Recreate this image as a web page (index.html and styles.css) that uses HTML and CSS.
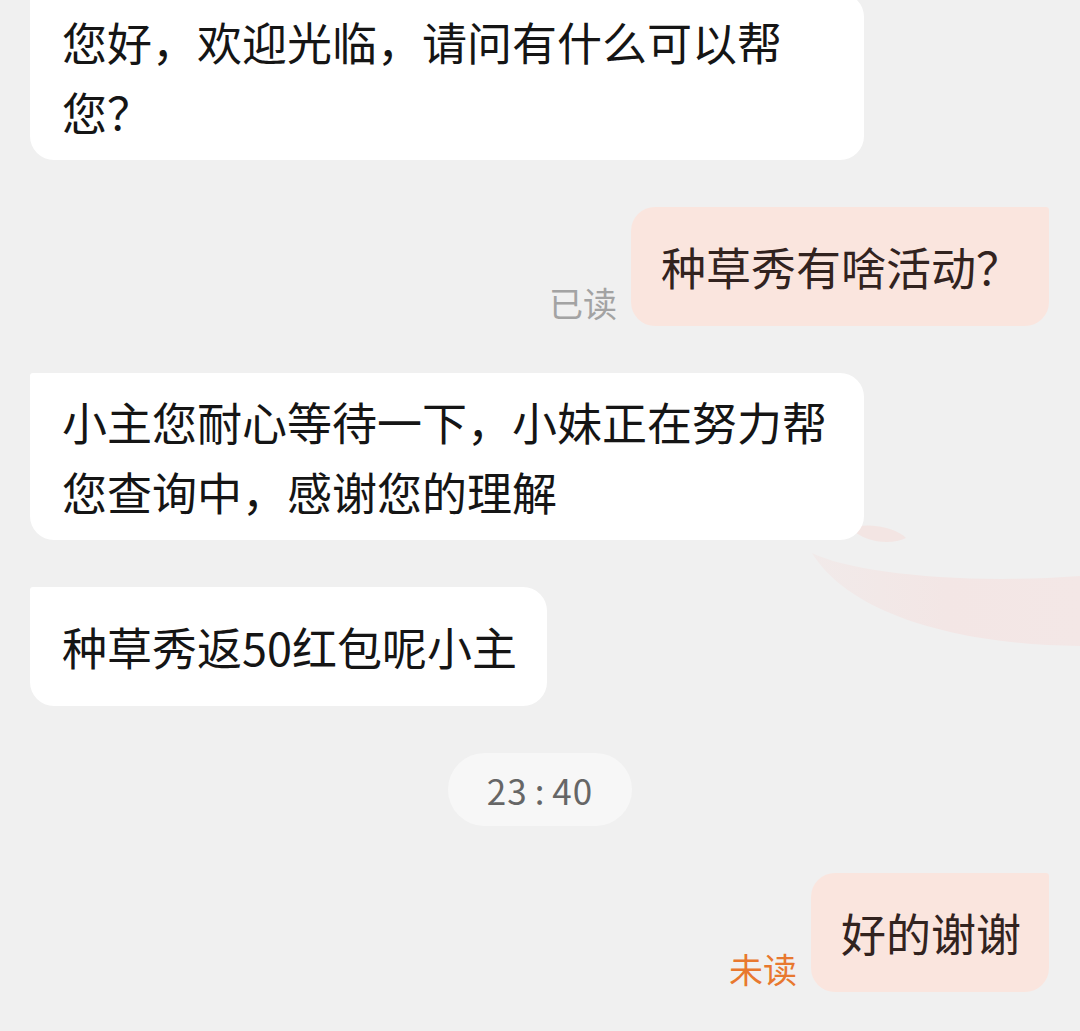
FILE: index.html
```html
<!DOCTYPE html>
<html lang="zh-CN">
  <head>
    <meta charset="UTF-8" />
    <meta name="viewport" content="width=device-width, initial-scale=1.0" />
    <title>聊天</title>
    <link rel="stylesheet" href="styles.css">
  </head>
  <body>
    <svg class="watermark" width="1080" height="1031" viewBox="0 0 1080 1031" aria-hidden="true">
      <defs>
        <linearGradient id="swoosh" x1="0" y1="0" x2="1" y2="0">
          <stop offset="0" stop-color="#f2e6e5" stop-opacity="0.6" />
          <stop offset="0.5" stop-color="#f3e6e5" />
          <stop offset="1" stop-color="#f3e7e6" />
        </linearGradient>
      </defs>
      <!-- faint brand swoosh behind the chat -->
      <path d="M850 528 C 870 522, 896 528, 906 538 C 890 546, 864 542, 850 528 Z" fill="#f3e5e3" />
      <path d="M812 553 C 850 572, 960 585, 1080 576 L 1080 646 C 960 645, 850 615, 812 553 Z" fill="url(#swoosh)" />
    </svg>

    <main class="chat">
      <div class="row row-in">
        <div class="bubble bubble-in">您好，欢迎光临，请问有什么可以帮您？</div>
      </div>

      <div class="row row-out">
        <span class="status">已读</span>
        <div class="bubble bubble-out">种草秀有啥活动？</div>
      </div>

      <div class="row row-in">
        <div class="bubble bubble-in">小主您耐心等待一下，小妹正在努力帮您查询中，感谢您的理解</div>
      </div>

      <div class="row row-in">
        <div class="bubble bubble-in">种草秀返50红包呢小主</div>
      </div>

      <div class="row row-time">
        <span class="time">23<span class="colon">:</span>40</span>
      </div>

      <div class="row row-out">
        <span class="status status-unread">未读</span>
        <div class="bubble bubble-out">好的谢谢</div>
      </div>
    </main>
  </body>
</html>
```

FILE: styles.css
```css
body {
  margin: 0;
  padding: 0;
  background-color: #f0f0f0;
  font-family: "Noto Sans CJK SC", "Noto Sans", sans-serif;
  color: #151515;
  overflow: hidden;
}

/* background swoosh */
.watermark {
  position: absolute;
  top: 0;
  left: 0;
  z-index: 0;
}

/* Chat column */
.chat {
  position: relative;
  z-index: 1;
  display: flex;
  flex-direction: column;
  gap: 47px;
  margin-top: -7px;
  padding: 0 31px 0 30px;
}

.row {
  display: flex;
  align-items: flex-end;
}

.row-in {
  justify-content: flex-start;
}

.row-out {
  justify-content: flex-end;
  gap: 14px;
}

.row-time {
  justify-content: center;
  padding-left: 1px;
}

/* Bubbles */
.bubble {
  box-sizing: border-box;
  max-width: 834px;
  min-height: 119px;
  display: flex;
  align-items: center;
  padding: 14px 30px 13px 32px;
  font-size: 45px;
  line-height: 70px;
}

.bubble-in {
  background-color: #ffffff;
  border-radius: 3px 24px 24px 24px;
}

.bubble-out {
  background-color: #fae5de;
  color: #32231f;
  border-radius: 24px 3px 24px 24px;
  padding-left: 30px;
  padding-right: 28px;
}

/* Read status */
.status {
  font-size: 34px;
  line-height: 34px;
  color: #a3a3a3;
  margin-bottom: 6px;
}

.status-unread {
  color: #e8782f;
}

/* Timestamp */
.time {
  display: inline-block;
  width: 184px;
  height: 73px;
  line-height: 73px;
  text-align: center;
  border-radius: 37px;
  background-color: #f7f7f7;
  color: #666666;
  font-size: 35px;
  letter-spacing: 1px;
}

.colon {
  margin: 0 7px;
}
```
